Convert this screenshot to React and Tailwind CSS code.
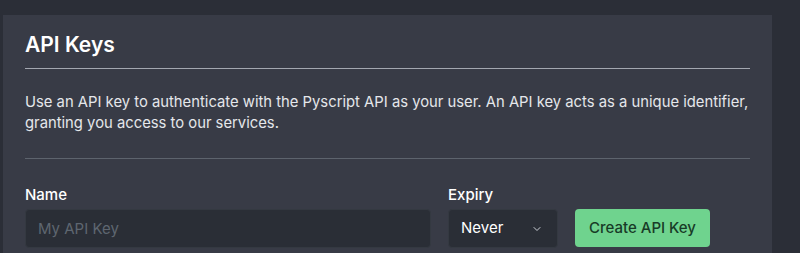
import React from "react";

export default function App() {
  return (
    <div className="w-[800px] h-[253px] overflow-hidden bg-[#2b2e37] pt-[15px] pl-[3px]" style={{ fontFamily: "Inter, 'Noto Sans', sans-serif" }}>
      <div className="w-[769px] h-[260px] bg-[#383b46] px-[22px] pt-[16px]">
        <h2 className="text-[21px] leading-[28px] font-semibold text-white">API Keys</h2>
        <div className="mt-[9px] h-px bg-[#a3a7b0]" />
        <p className="mt-[23px] text-[14.8px] leading-[21px] text-[#e5e7eb]">
          Use an API key to authenticate with the Pyscript API as your user. An API key acts as a unique identifier, granting you access to our services.
        </p>
        <div className="mt-[24px] h-px bg-[#5d636d]" />
        <div className="mt-[26px] flex items-end gap-[17px]">
          <div className="flex flex-col">
            <label className="text-[15px] leading-[20px] font-medium text-white">Name</label>
            <input
              placeholder="My API Key"
              className="mt-[4px] w-[406px] h-[39px] rounded-[4px] border border-[#343941] bg-[#2a2e36] px-[12px] text-[15px] text-white placeholder:text-[#5e6670] outline-none"
            />
          </div>
          <div className="flex flex-col">
            <label className="text-[15px] leading-[20px] font-medium text-white">Expiry</label>
            <div className="mt-[4px] w-[110px] h-[39px] rounded-[4px] border border-[#343941] bg-[#2a2e36] pl-[12px] pr-[14px] flex items-center justify-between text-[15px] text-white">
              <span>Never</span>
              <svg width="12" height="12" viewBox="0 0 24 24" fill="none" stroke="#cbd0d6" strokeWidth="2" strokeLinecap="round" strokeLinejoin="round">
                <path d="m6 9 6 6 6-6" />
              </svg>
            </div>
          </div>
          <button className="w-[135px] h-[38px] rounded-[4px] bg-[#6fd38e] text-[15px] font-medium text-[#183b27] mb-px">
            Create API Key
          </button>
        </div>
      </div>
    </div>
  );
}
